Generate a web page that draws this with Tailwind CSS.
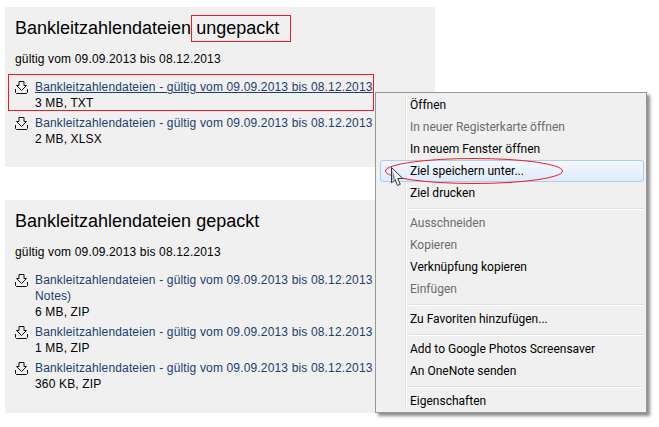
<!DOCTYPE html>
<html lang="de">
<head>
  <meta charset="UTF-8" />
  <title>Bankleitzahlendateien</title>
  <script src="https://cdn.jsdelivr.net/npm/@tailwindcss/browser@4"></script>
</head>
<body class="bg-white">
  <div class="relative w-[659px] h-[427px] overflow-hidden bg-white font-['Liberation_Sans',Arial,sans-serif] text-[12px] leading-4 tracking-[0.155px] text-black">

    <div class="flex flex-col gap-[33px] pt-[7px] pl-[5px]">
      <!-- ungepackt -->
      <section class="w-[430px] h-[160px] bg-[#f0f0f0] pl-[10px] pt-[9px]">
        <h2 class="text-[18px] leading-[24px] tracking-normal">Bankleitzahlendateien ungepackt</h2>
        <p class="mt-[11px]">gültig vom 09.09.2013 bis 08.12.2013</p>
        <ul class="mt-[12px] flex flex-col gap-[4px]">
          <li class="flex">
            <svg class="w-[13px] h-[13px] mt-[2px] mr-[7px] shrink-0" viewBox="0 0 13 13" fill="none" stroke="#111" stroke-width="1"><path d="M4 .5h5v4h2.500L6.500 9.500 1.500 4.500H4z"/><path d="M.5 8v3.500l1 1h10l1-1V8"/></svg>
            <div><a class="text-[#1c3d6e] underline whitespace-nowrap">Bankleitzahlendateien - gültig vom 09.09.2013 bis 08.12.2013</a><br />3 MB, TXT</div>
          </li>
          <li class="flex">
            <svg class="w-[13px] h-[13px] mt-[2px] mr-[7px] shrink-0" viewBox="0 0 13 13" fill="none" stroke="#111" stroke-width="1"><path d="M4 .5h5v4h2.500L6.500 9.500 1.500 4.500H4z"/><path d="M.5 8v3.500l1 1h10l1-1V8"/></svg>
            <div><a class="text-[#1c3d6e] whitespace-nowrap">Bankleitzahlendateien - gültig vom 09.09.2013 bis 08.12.2013</a><br />2 MB, XLSX</div>
          </li>
        </ul>
      </section>

      <!-- gepackt -->
      <section class="w-[430px] h-[213px] bg-[#f0f0f0] pl-[10px] pt-[9px]">
        <h2 class="text-[18px] leading-[24px] tracking-normal">Bankleitzahlendateien gepackt</h2>
        <p class="mt-[11px]">gültig vom 09.09.2013 bis 08.12.2013</p>
        <ul class="mt-[12px] flex flex-col gap-[4px]">
          <li class="flex">
            <svg class="w-[13px] h-[13px] mt-[2px] mr-[7px] shrink-0" viewBox="0 0 13 13" fill="none" stroke="#111" stroke-width="1"><path d="M4 .5h5v4h2.500L6.500 9.500 1.500 4.500H4z"/><path d="M.5 8v3.500l1 1h10l1-1V8"/></svg>
            <div><a class="text-[#1c3d6e] whitespace-nowrap">Bankleitzahlendateien - gültig vom 09.09.2013 bis 08.12.2013</a><br /><a class="text-[#1c3d6e]">Notes)</a><br />6 MB, ZIP</div>
          </li>
          <li class="flex">
            <svg class="w-[13px] h-[13px] mt-[2px] mr-[7px] shrink-0" viewBox="0 0 13 13" fill="none" stroke="#111" stroke-width="1"><path d="M4 .5h5v4h2.500L6.500 9.500 1.500 4.500H4z"/><path d="M.5 8v3.500l1 1h10l1-1V8"/></svg>
            <div><a class="text-[#1c3d6e] whitespace-nowrap">Bankleitzahlendateien - gültig vom 09.09.2013 bis 08.12.2013</a><br />1 MB, ZIP</div>
          </li>
          <li class="flex">
            <svg class="w-[13px] h-[13px] mt-[2px] mr-[7px] shrink-0" viewBox="0 0 13 13" fill="none" stroke="#111" stroke-width="1"><path d="M4 .5h5v4h2.500L6.500 9.500 1.500 4.500H4z"/><path d="M.5 8v3.500l1 1h10l1-1V8"/></svg>
            <div><a class="text-[#1c3d6e] whitespace-nowrap">Bankleitzahlendateien - gültig vom 09.09.2013 bis 08.12.2013</a><br />360 KB, ZIP</div>
          </li>
        </ul>
      </section>
    </div>

    <!-- red annotation boxes -->
    <div class="absolute left-[191px] top-[15px] w-[100px] h-[27px] border border-[#ed1c24]"></div>
    <div class="absolute left-[8px] top-[74px] w-[366px] h-[37px] border border-[#ed1c24]"></div>

    <!-- context menu -->
    <div class="absolute left-[375px] top-[92px] w-[272px] h-[321px] border border-[#979797] bg-[#f0f0f0] px-[2px] pt-[1px] shadow-[3px_3px_3px_rgba(0,0,0,0.45)] font-['Roboto',sans-serif] text-[12px] leading-[22px] tracking-normal whitespace-nowrap">
      <div class="absolute left-[29px] top-[2px] bottom-[2px] w-px bg-[#e2e3e3] border-r border-white box-content"></div>
      <div class="relative flex flex-col pl-[32px]">
        <div class="h-[22px]">Öffnen</div>
        <div class="h-[22px] text-[#6d6d6d]">In neuer Registerkarte öffnen</div>
        <div class="h-[22px]">In neuem Fenster öffnen</div>
        <div class="h-[22px] -ml-[30px] pl-[29px] rounded-[3px] border border-[#aeccee] bg-gradient-to-b from-[#f4f8fd] to-[#dfeafa] leading-[20px]">Ziel speichern unter...</div>
        <div class="h-[22px]">Ziel drucken</div>
        <div class="h-px mt-[4px] mb-[2px] -ml-[1px] bg-[#e0e0e0] border-b border-white box-content"></div>
        <div class="h-[22px] text-[#6d6d6d]">Ausschneiden</div>
        <div class="h-[22px] text-[#6d6d6d]">Kopieren</div>
        <div class="h-[22px]">Verknüpfung kopieren</div>
        <div class="h-[22px] text-[#6d6d6d]">Einfügen</div>
        <div class="h-px mt-[4px] mb-[2px] -ml-[1px] bg-[#e0e0e0] border-b border-white box-content"></div>
        <div class="h-[22px]">Zu Favoriten hinzufügen...</div>
        <div class="h-px mt-[4px] mb-[2px] -ml-[1px] bg-[#e0e0e0] border-b border-white box-content"></div>
        <div class="h-[22px]">Add to Google Photos Screensaver</div>
        <div class="h-[22px]">An OneNote senden</div>
        <div class="h-px mt-[4px] mb-[2px] -ml-[1px] bg-[#e0e0e0] border-b border-white box-content"></div>
        <div class="h-[22px]">Eigenschaften</div>
      </div>
    </div>

    <!-- ellipse annotation -->
    <svg class="absolute left-[384px] top-[157px]" width="180" height="28" viewBox="0 0 180 28" fill="none"><ellipse cx="90" cy="14" rx="88.500" ry="12.500" stroke="#ed1c24" stroke-width="1"/></svg>

    <!-- cursor -->
    <svg class="absolute left-[390px] top-[166px]" width="14" height="22" viewBox="0 0 14 22"><path d="M1.500 1.500V17l3.500-3.500 2.500 6 2.800-1.200-2.500-5.800h5z" fill="#eef0f2" stroke="#33363a" stroke-width="1" stroke-linejoin="round"/><path d="M2.500 4V14.500L5 12z" fill="#8d9298"/></svg>
  </div>
</body>
</html>
